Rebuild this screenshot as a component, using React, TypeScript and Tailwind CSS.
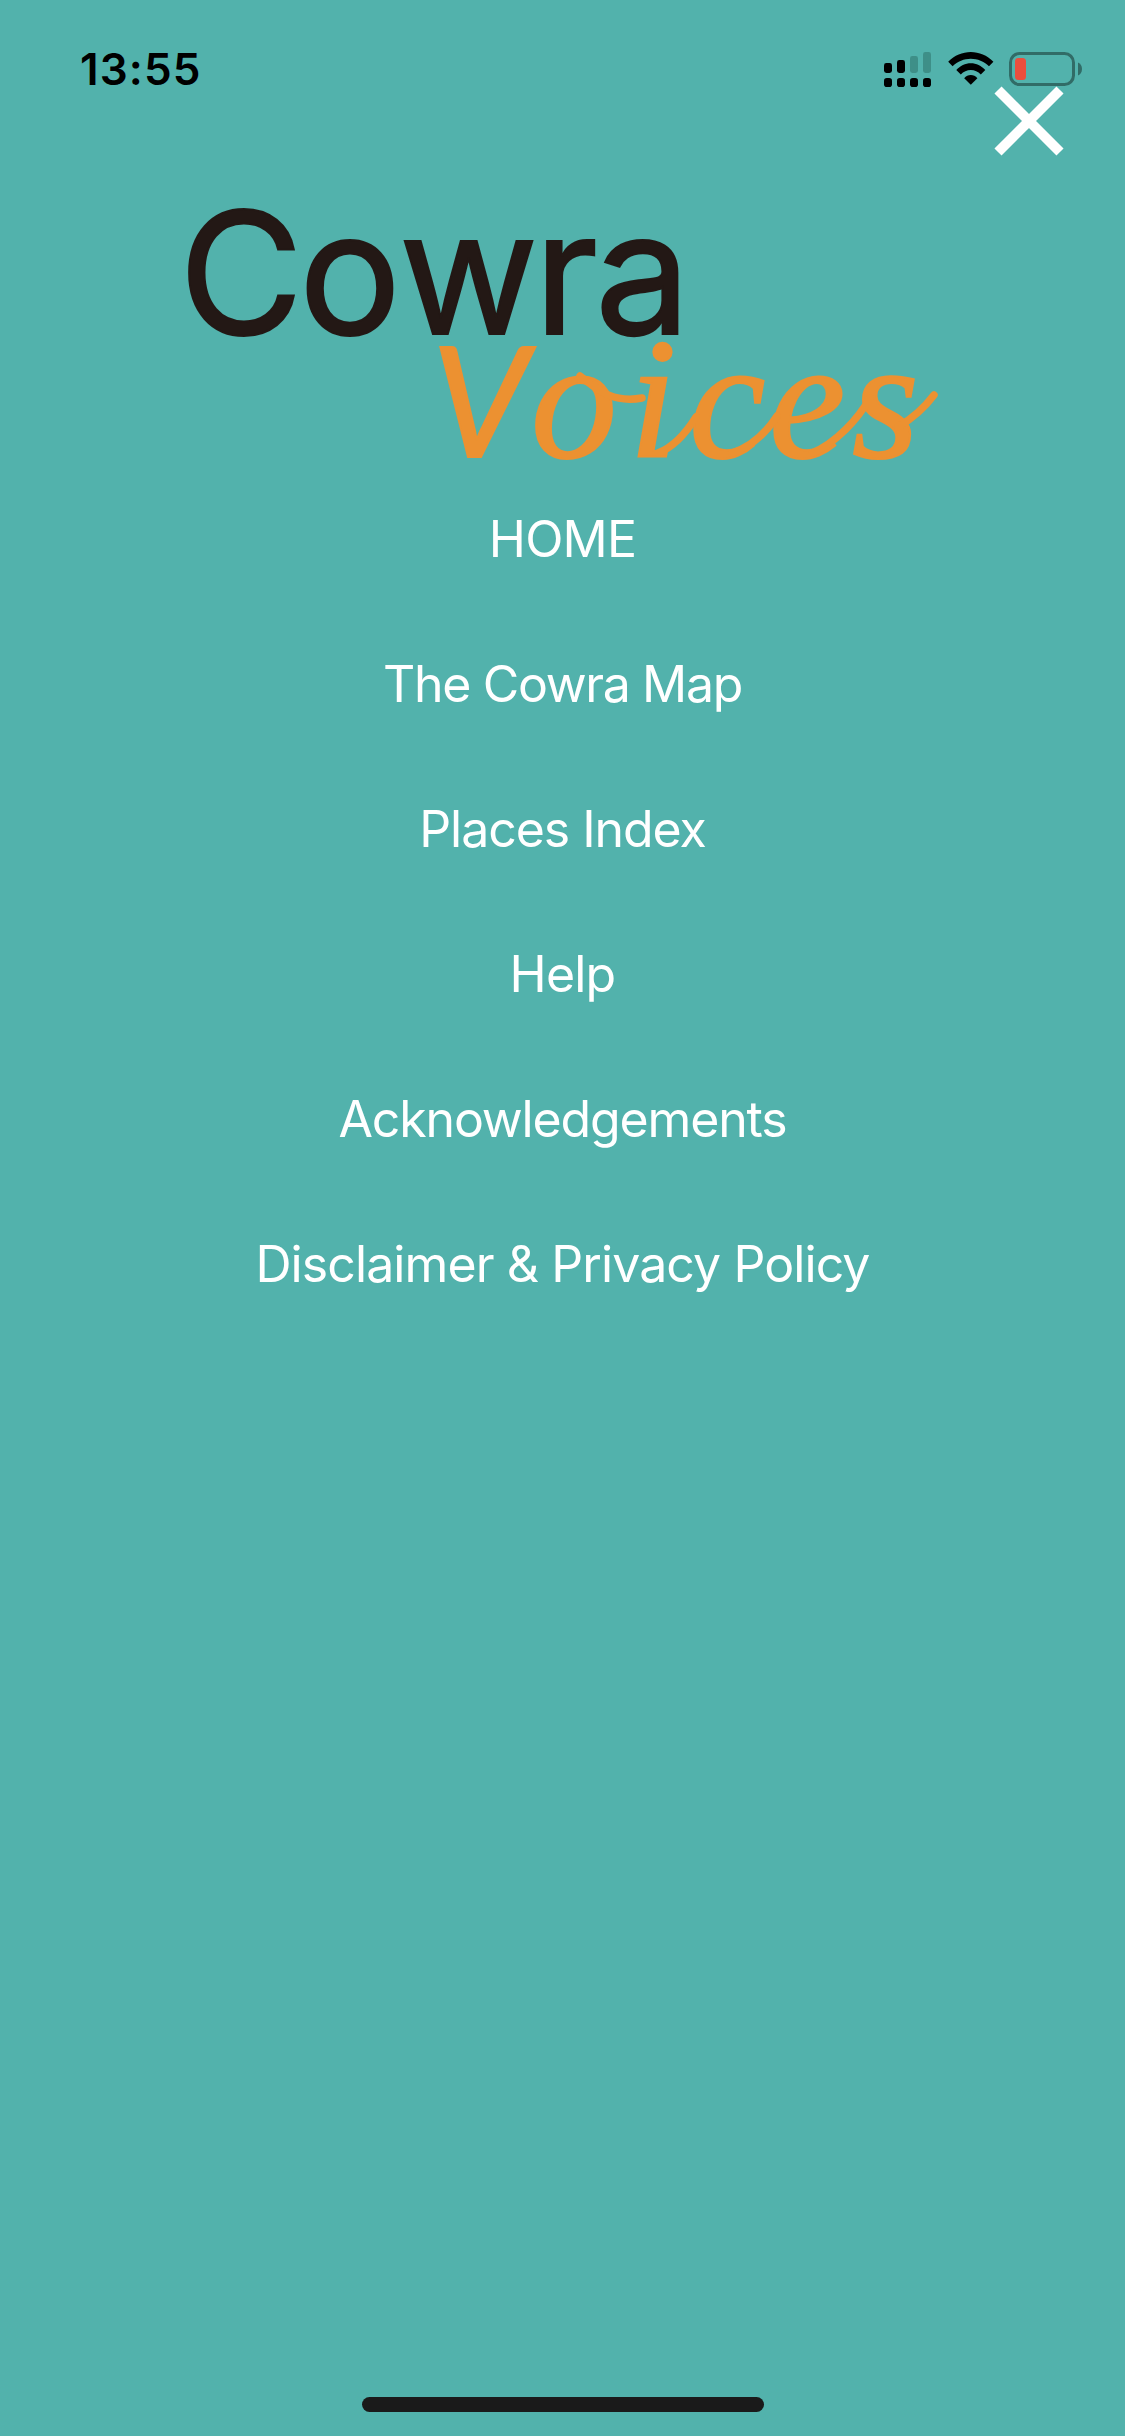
const menuItems = [
  { label: "HOME", tracking: "tracking-[-0.8px]" },
  { label: "The Cowra Map", tracking: "tracking-[-1.35px]" },
  { label: "Places Index", tracking: "tracking-[-1.05px]" },
  { label: "Help", tracking: "tracking-[-0.8px]" },
  { label: "Acknowledgements", tracking: "tracking-[-1.15px]" },
  { label: "Disclaimer & Privacy Policy", tracking: "tracking-[-0.9px]" },
];

function CellularIcon() {
  return (
    <svg className="h-9 w-12" viewBox="0 0 48 36" aria-hidden="true">
      <g fill="#000">
        <rect x="0" y="11" width="8" height="10" rx="2.4" />
        <rect x="13" y="8" width="8" height="13" rx="2.4" />
        <rect x="0" y="26" width="8" height="9" rx="2.8" />
        <rect x="13" y="26" width="8" height="9" rx="2.8" />
        <rect x="26" y="26" width="8" height="9" rx="2.8" />
        <rect x="39" y="26" width="8" height="9" rx="2.8" />
      </g>
      <g fill="#3e8f88">
        <rect x="26" y="4" width="8" height="17" rx="2.4" />
        <rect x="39" y="0" width="8" height="21" rx="2.4" />
      </g>
    </svg>
  );
}

function WifiIcon() {
  return (
    <svg className="h-[33px] w-[46px]" viewBox="0 0 46 33" aria-hidden="true">
      <path d="M0.2 9.7C6.5 3.4 14.5 0 22.8 0s16.300 3.400 22.600 9.700L41 14.300C36 9.400 29.500 6.700 22.800 6.700S9.600 9.400 4.600 14.300Z" />
      <path d="M8.300 18C12.200 13.800 17.300 11.300 22.800 11.300s10.600 2.500 14.500 6.700L32.800 22.500C30.100 19.700 26.600 18 22.800 18s-7.300 1.700-10 4.500Z" />
      <path d="M16.200 26.200C18 24.200 20.300 23 22.800 23s4.800 1.200 6.600 3.200L22.800 32.800Z" />
    </svg>
  );
}

function BatteryIcon() {
  return (
    <svg className="h-[34px] w-[74px]" viewBox="0 0 74 34" aria-hidden="true">
      <rect x="1.500" y="1.500" width="63" height="31" rx="9" fill="none" stroke="#316c67" strokeWidth="3" />
      <rect x="6" y="6" width="11" height="22" rx="3.500" fill="#eb4e3d" />
      <path d="M69 10.500c2.500 1 4 3.500 4 6.500s-1.500 5.500-4 6.500Z" fill="#316c67" />
    </svg>
  );
}

function StatusBar() {
  return (
    <header className="flex h-[136px] items-start justify-between pl-20 pr-[42px] font-['Inter',sans-serif]">
      <time className="mt-[42px] text-[44px] leading-[54px] font-semibold tracking-[1.1px] text-black">13:55</time>
      <div className="mt-[52px] flex items-start">
        <CellularIcon />
        <div className="ml-4">
          <WifiIcon />
        </div>
        <div className="ml-[15px]">
          <BatteryIcon />
        </div>
      </div>
    </header>
  );
}

function Logo() {
  return (
    <svg className="h-[290px] w-full overflow-visible" viewBox="0 190 1125 290" role="img" aria-label="Cowra Voices">
      <text
        x="179 299 399 534 595"
        y="334"
        fill="#231815"
        stroke="#231815"
        strokeWidth="2"
        fontFamily="Inter, sans-serif"
        fontSize="170"
      >
        Cowra
      </text>
      <text x="432 531 629 689 769 852" y="457" fill="#ec9131" stroke="#ec9131" strokeWidth="2" fontStyle="italic">
        <tspan fontFamily="Lato, sans-serif" fontSize="153">V</tspan>
        <tspan fontFamily="'Liberation Serif', serif" fontSize="172">oices</tspan>
      </text>
      {/* flourishes that join the script letters */}
      <g fill="none" stroke="#ec9131" strokeWidth="7.500" strokeLinecap="round">
        <path d="M580 376C594 386 610 404 642 398" />
        <path d="M658 453C674 447 686 433 696 417" />
        <path d="M732 453C750 447 766 433 777 416" />
        <path d="M812 453C836 443 858 419 870 398" />
        <path d="M898 427C913 418 925 407 934 395" />
      </g>
    </svg>
  );
}

export default function App() {
  return (
    <main className="relative flex h-[2436px] w-[1125px] flex-col overflow-hidden bg-[#52b2ac]">
      <StatusBar />
      <button className="absolute top-[86px] left-[994px] size-[70px]" aria-label="Close menu">
        <svg className="size-[70px]" viewBox="0 0 70 70" fill="none" stroke="#fff" strokeWidth="10">
          <path d="M4 4 66 66M66 4 4 66" />
        </svg>
      </button>
      <div className="mt-[54px]">
        <Logo />
      </div>
      <nav className="mt-[-13px] flex flex-col items-center font-['Inter',sans-serif] text-[50px] text-white">
        {menuItems.map(({ label, tracking }) => (
          <a key={label} className={`flex h-[145px] items-center whitespace-nowrap ${tracking}`}>
            {label}
          </a>
        ))}
      </nav>
      <div className="mx-auto mt-auto mb-6 h-[15px] w-[402px] rounded-full bg-[#1a1a1a]" />
    </main>
  );
}
